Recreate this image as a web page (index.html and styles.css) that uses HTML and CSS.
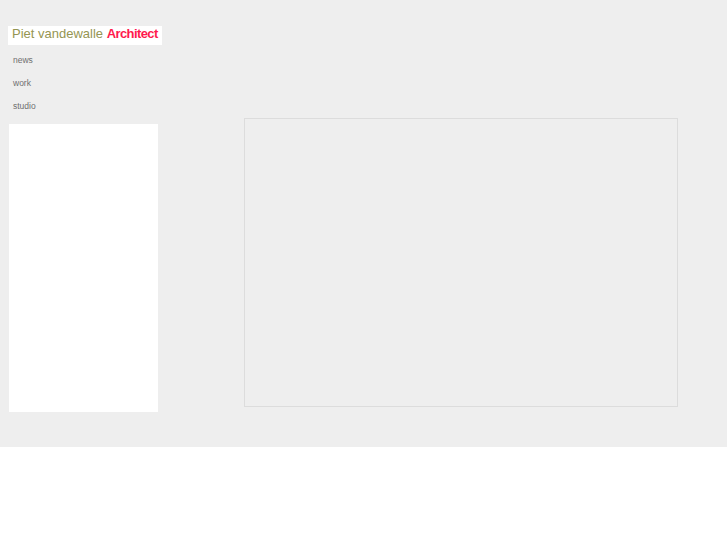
FILE: index.html
```html
<!DOCTYPE html>
<html lang="en">
<head>
  <meta charset="UTF-8">
  <meta name="viewport" content="width=device-width, initial-scale=1.0">
  <title>Piet vandewalle Architect</title>
  <link rel="stylesheet" href="styles.css">
</head>
<body>
  <div class="page">
    <div class="sidebar">
      <div class="logo">
        <span class="logo-name">Piet vandewalle</span>
        <span class="logo-title">Architect</span>
      </div>
      <ul class="nav">
        <li><a href="#">news</a></li>
        <li><a href="#">work</a></li>
        <li><a href="#">studio</a></li>
      </ul>
      <div class="side-panel"></div>
    </div>
    <div class="content">
      <div class="stage"></div>
    </div>
  </div>
</body>
</html>
```

FILE: styles.css
```css
body {
  margin: 0;
  background-color: #fff;
  font-family: "Liberation Sans", Arial, sans-serif;
}
.page {
  background-color: #eee;
  height: 447px;
  box-sizing: border-box;
  padding: 26px 0 0 8px;
  display: flex;
}
.sidebar {
  width: 154px;
}
.logo {
  background: #fff;
  height: 19px;
  line-height: 16px;
  padding-left: 4px;
  font-size: 13px;
  white-space: nowrap;
}
.logo-name {
  color: #959552;
}
.logo-title {
  color: #ff1a4d;
  font-weight: bold;
  letter-spacing: -0.6px;
}
.nav {
  list-style: none;
  margin: 4px 0 0 0;
  padding: 0 0 0 5px;
}
.nav li {
  height: 23px;
  line-height: 23px;
  font-size: 8.5px;
}
.nav a {
  color: #6e6e6e;
  text-decoration: none;
}
.side-panel {
  background: #fff;
  width: 149px;
  height: 288px;
  margin: 6px 0 0 1px;
}
.content {
  margin: 92px 0 0 82px;
}
.stage {
  width: 432px;
  height: 287px;
  border: 1px solid #dcdcdc;
}
```
